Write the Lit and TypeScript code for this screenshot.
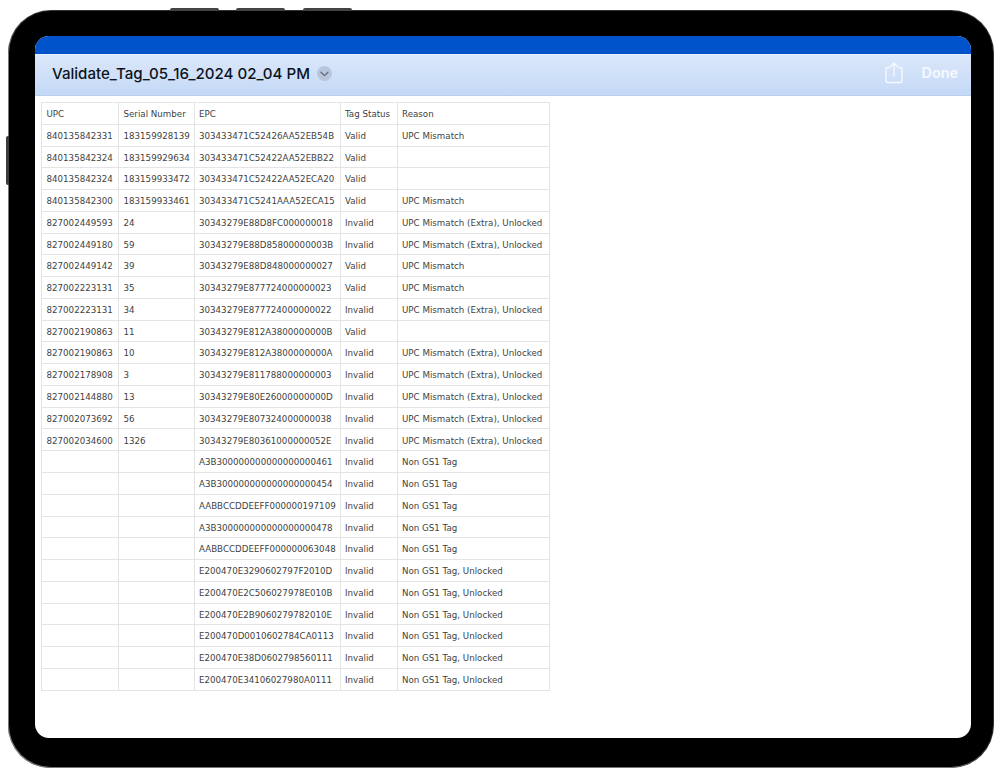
import { LitElement, html, css } from "lit";
import { customElement } from "lit/decorators.js";

const rows: string[][] = [
  ["840135842331","183159928139","303433471C52426AA52EB54B","Valid","UPC Mismatch"],
  ["840135842324","183159929634","303433471C52422AA52EBB22","Valid",""],
  ["840135842324","183159933472","303433471C52422AA52ECA20","Valid",""],
  ["840135842300","183159933461","303433471C5241AAA52ECA15","Valid","UPC Mismatch"],
  ["827002449593","24","30343279E88D8FC000000018","Invalid","UPC Mismatch (Extra), Unlocked"],
  ["827002449180","59","30343279E88D85800000003B","Invalid","UPC Mismatch (Extra), Unlocked"],
  ["827002449142","39","30343279E88D848000000027","Valid","UPC Mismatch"],
  ["827002223131","35","30343279E877724000000023","Valid","UPC Mismatch"],
  ["827002223131","34","30343279E877724000000022","Invalid","UPC Mismatch (Extra), Unlocked"],
  ["827002190863","11","30343279E812A3800000000B","Valid",""],
  ["827002190863","10","30343279E812A3800000000A","Invalid","UPC Mismatch (Extra), Unlocked"],
  ["827002178908","3","30343279E811788000000003","Invalid","UPC Mismatch (Extra), Unlocked"],
  ["827002144880","13","30343279E80E26000000000D","Invalid","UPC Mismatch (Extra), Unlocked"],
  ["827002073692","56","30343279E807324000000038","Invalid","UPC Mismatch (Extra), Unlocked"],
  ["827002034600","1326","30343279E80361000000052E","Invalid","UPC Mismatch (Extra), Unlocked"],
  ["","","A3B300000000000000000461","Invalid","Non GS1 Tag"],
  ["","","A3B300000000000000000454","Invalid","Non GS1 Tag"],
  ["","","AABBCCDDEEFF000000197109","Invalid","Non GS1 Tag"],
  ["","","A3B300000000000000000478","Invalid","Non GS1 Tag"],
  ["","","AABBCCDDEEFF000000063048","Invalid","Non GS1 Tag"],
  ["","","E200470E3290602797F2010D","Invalid","Non GS1 Tag, Unlocked"],
  ["","","E200470E2C506027978E010B","Invalid","Non GS1 Tag, Unlocked"],
  ["","","E200470E2B9060279782010E","Invalid","Non GS1 Tag, Unlocked"],
  ["","","E200470D0010602784CA0113","Invalid","Non GS1 Tag, Unlocked"],
  ["","","E200470E38D0602798560111","Invalid","Non GS1 Tag, Unlocked"],
  ["","","E200470E34106027980A0111","Invalid","Non GS1 Tag, Unlocked"],
];

@customElement("app-root")
export class AppRoot extends LitElement {
  static styles = css`
    :host { display: block; width: 1000px; height: 774px; background: #fff; overflow: hidden; }
    .stage { padding: 11px 7px 7px 9px; box-sizing: border-box; height: 774px; }
    .device {
      position: relative; box-sizing: border-box; width: 984px; height: 756px;
      background: #000; border-radius: 42px; padding: 25px 22px 29px 26px;
      box-shadow: -1px 1px 0 0 #777, 0 0 0 1px #333;
    }
    .btn { position: absolute; background: #444; }
    .top { top: -3px; height: 3px; width: 49px; border-radius: 2px 2px 0 0; }
    .t1 { left: 161px; } .t2 { left: 227px; } .t3 { left: 294px; }
    .side { left: -3px; top: 125px; width: 3px; height: 49px; border-radius: 2px 0 0 2px; background: #3c3c3c; }
    .screen {
      height: 702px; background: #fff; border-radius: 14px; overflow: hidden;
      display: flex; flex-direction: column;
    }
    .status { height: 18px; background: #0053ca; flex: none; }
    .nav {
      height: 42px; flex: none; box-sizing: border-box; display: flex; align-items: center;
      padding: 0 13px 3px 17px; border-top: 1px solid #e6effc; border-bottom: 1px solid #b9cfee;
      background: linear-gradient(#dbe7fa, #c4d9f7);
    }
    .title { font: 500 15.1px/1 Inter, "Liberation Sans", sans-serif; color: #0b1320; white-space: nowrap; }
    .chev { width: 15px; height: 15px; margin-left: 7px; border-radius: 50%; background: #b8c5da; display: flex; align-items: center; justify-content: center; }
    .spacer { flex: 1; }
    .share { width: 18px; height: 22px; margin: 0 19px 2px 0; display: block; }
    .done { font: 600 14.4px/1 Inter, "Liberation Sans", sans-serif; color: #f6f9ff; }
    .body { flex: 1; padding: 6px 0 0 6px; }
    table { border-collapse: collapse; table-layout: fixed; width: 507.5px; font: 8.7px/1 "DejaVu Sans", Verdana, sans-serif; color: #3f3f3f; }
    td { border: 1px solid #e4e4e4; height: 21.78px; padding: 2px 0 0 4.5px; white-space: nowrap; overflow: hidden; box-sizing: border-box; }
    .c1 { width: 77px; } .c2 { width: 75.5px; } .c3 { width: 146px; } .c4 { width: 57px; } .c5 { width: 152px; }
  `;

  render() {
    const head = ["UPC", "Serial Number", "EPC", "Tag Status", "Reason"];
    return html`
      <div class="stage">
        <div class="device">
          <div class="btn top t1"></div>
          <div class="btn top t2"></div>
          <div class="btn top t3"></div>
          <div class="btn side"></div>
          <div class="screen">
            <div class="status"></div>
            <div class="nav">
              <span class="title">Validate_Tag_05_16_2024 02_04 PM</span>
              <span class="chev">
                <svg width="9" height="6" viewBox="0 0 9 6" fill="none" stroke="#5f6c82" stroke-width="1.3" stroke-linecap="round" stroke-linejoin="round"><path d="M1 1.2 4.5 4.6 8 1.2"/></svg>
              </span>
              <span class="spacer"></span>
              <svg class="share" viewBox="0 0 18 22" fill="none" stroke="#f6f9ff" stroke-width="1.4" stroke-linecap="round" stroke-linejoin="round">
                <path d="M4.5 5.5H3a2 2 0 0 0-2 2v11a2 2 0 0 0 2 2h12a2 2 0 0 0 2-2v-11a2 2 0 0 0-2-2h-1.5"/>
                <path d="M9 14V1.2M5.8 4.2 9 1l3.2 3.2"/>
              </svg>
              <span class="done">Done</span>
            </div>
            <div class="body">
              <table>
                <colgroup><col class="c1"/><col class="c2"/><col class="c3"/><col class="c4"/><col class="c5"/></colgroup>
                <tbody>
                  <tr>${head.map((h) => html`<td>${h}</td>`)}</tr>
                  ${rows.map((r) => html`<tr>${r.map((c) => html`<td>${c}</td>`)}</tr>`)}
                </tbody>
              </table>
            </div>
          </div>
        </div>
      </div>
    `;
  }
}
